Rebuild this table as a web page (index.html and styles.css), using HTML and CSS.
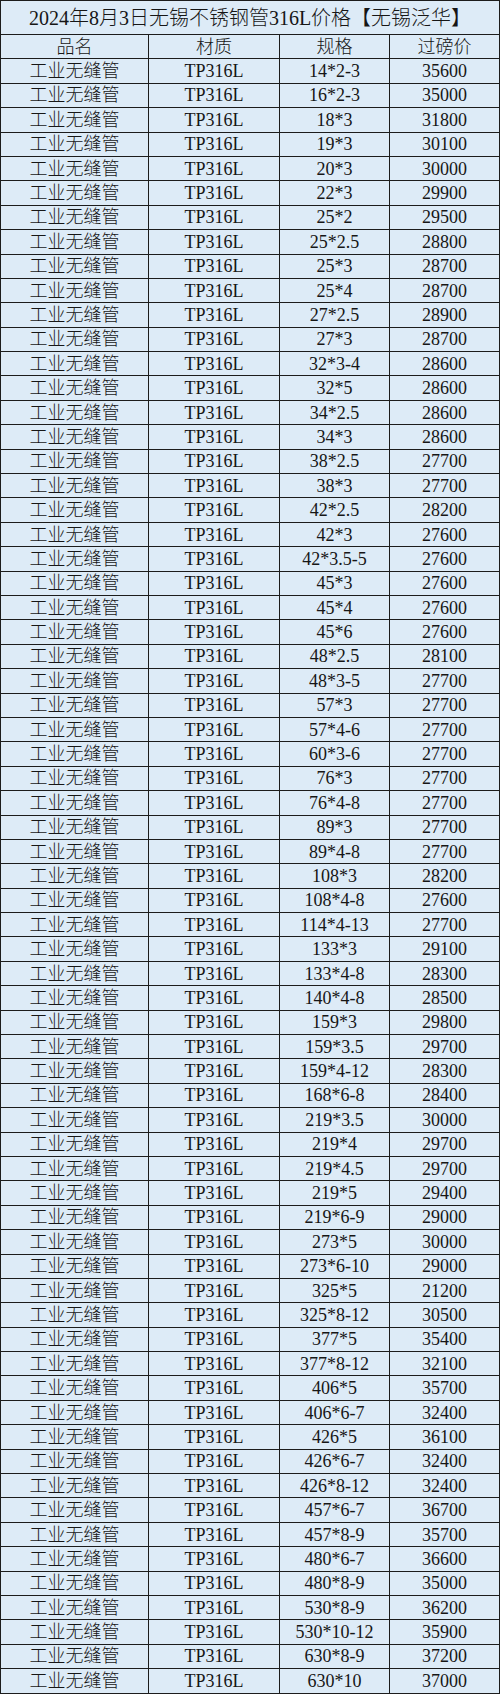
FILE: index.html
```html
<!DOCTYPE html>
<html lang="zh-CN">
<head>
<meta charset="utf-8">
<title>2024年8月3日无锡不锈钢管316L价格</title>
<link rel="stylesheet" href="styles.css">
</head>
<body>
<div class="sheet">
<div class="title">2024年8月3日无锡不锈钢管316L价格【无锡泛华】</div>
<div class="row head"><div class="cell">品名</div><div class="cell">材质</div><div class="cell">规格</div><div class="cell">过磅价</div></div>
<div class="row"><div class="cell">工业无缝管</div><div class="cell">TP316L</div><div class="cell">14*2-3</div><div class="cell">35600</div></div>
<div class="row"><div class="cell">工业无缝管</div><div class="cell">TP316L</div><div class="cell">16*2-3</div><div class="cell">35000</div></div>
<div class="row"><div class="cell">工业无缝管</div><div class="cell">TP316L</div><div class="cell">18*3</div><div class="cell">31800</div></div>
<div class="row"><div class="cell">工业无缝管</div><div class="cell">TP316L</div><div class="cell">19*3</div><div class="cell">30100</div></div>
<div class="row"><div class="cell">工业无缝管</div><div class="cell">TP316L</div><div class="cell">20*3</div><div class="cell">30000</div></div>
<div class="row"><div class="cell">工业无缝管</div><div class="cell">TP316L</div><div class="cell">22*3</div><div class="cell">29900</div></div>
<div class="row"><div class="cell">工业无缝管</div><div class="cell">TP316L</div><div class="cell">25*2</div><div class="cell">29500</div></div>
<div class="row"><div class="cell">工业无缝管</div><div class="cell">TP316L</div><div class="cell">25*2.5</div><div class="cell">28800</div></div>
<div class="row"><div class="cell">工业无缝管</div><div class="cell">TP316L</div><div class="cell">25*3</div><div class="cell">28700</div></div>
<div class="row"><div class="cell">工业无缝管</div><div class="cell">TP316L</div><div class="cell">25*4</div><div class="cell">28700</div></div>
<div class="row"><div class="cell">工业无缝管</div><div class="cell">TP316L</div><div class="cell">27*2.5</div><div class="cell">28900</div></div>
<div class="row"><div class="cell">工业无缝管</div><div class="cell">TP316L</div><div class="cell">27*3</div><div class="cell">28700</div></div>
<div class="row"><div class="cell">工业无缝管</div><div class="cell">TP316L</div><div class="cell">32*3-4</div><div class="cell">28600</div></div>
<div class="row"><div class="cell">工业无缝管</div><div class="cell">TP316L</div><div class="cell">32*5</div><div class="cell">28600</div></div>
<div class="row"><div class="cell">工业无缝管</div><div class="cell">TP316L</div><div class="cell">34*2.5</div><div class="cell">28600</div></div>
<div class="row"><div class="cell">工业无缝管</div><div class="cell">TP316L</div><div class="cell">34*3</div><div class="cell">28600</div></div>
<div class="row"><div class="cell">工业无缝管</div><div class="cell">TP316L</div><div class="cell">38*2.5</div><div class="cell">27700</div></div>
<div class="row"><div class="cell">工业无缝管</div><div class="cell">TP316L</div><div class="cell">38*3</div><div class="cell">27700</div></div>
<div class="row"><div class="cell">工业无缝管</div><div class="cell">TP316L</div><div class="cell">42*2.5</div><div class="cell">28200</div></div>
<div class="row"><div class="cell">工业无缝管</div><div class="cell">TP316L</div><div class="cell">42*3</div><div class="cell">27600</div></div>
<div class="row"><div class="cell">工业无缝管</div><div class="cell">TP316L</div><div class="cell">42*3.5-5</div><div class="cell">27600</div></div>
<div class="row"><div class="cell">工业无缝管</div><div class="cell">TP316L</div><div class="cell">45*3</div><div class="cell">27600</div></div>
<div class="row"><div class="cell">工业无缝管</div><div class="cell">TP316L</div><div class="cell">45*4</div><div class="cell">27600</div></div>
<div class="row"><div class="cell">工业无缝管</div><div class="cell">TP316L</div><div class="cell">45*6</div><div class="cell">27600</div></div>
<div class="row"><div class="cell">工业无缝管</div><div class="cell">TP316L</div><div class="cell">48*2.5</div><div class="cell">28100</div></div>
<div class="row"><div class="cell">工业无缝管</div><div class="cell">TP316L</div><div class="cell">48*3-5</div><div class="cell">27700</div></div>
<div class="row"><div class="cell">工业无缝管</div><div class="cell">TP316L</div><div class="cell">57*3</div><div class="cell">27700</div></div>
<div class="row"><div class="cell">工业无缝管</div><div class="cell">TP316L</div><div class="cell">57*4-6</div><div class="cell">27700</div></div>
<div class="row"><div class="cell">工业无缝管</div><div class="cell">TP316L</div><div class="cell">60*3-6</div><div class="cell">27700</div></div>
<div class="row"><div class="cell">工业无缝管</div><div class="cell">TP316L</div><div class="cell">76*3</div><div class="cell">27700</div></div>
<div class="row"><div class="cell">工业无缝管</div><div class="cell">TP316L</div><div class="cell">76*4-8</div><div class="cell">27700</div></div>
<div class="row"><div class="cell">工业无缝管</div><div class="cell">TP316L</div><div class="cell">89*3</div><div class="cell">27700</div></div>
<div class="row"><div class="cell">工业无缝管</div><div class="cell">TP316L</div><div class="cell">89*4-8</div><div class="cell">27700</div></div>
<div class="row"><div class="cell">工业无缝管</div><div class="cell">TP316L</div><div class="cell">108*3</div><div class="cell">28200</div></div>
<div class="row"><div class="cell">工业无缝管</div><div class="cell">TP316L</div><div class="cell">108*4-8</div><div class="cell">27600</div></div>
<div class="row"><div class="cell">工业无缝管</div><div class="cell">TP316L</div><div class="cell">114*4-13</div><div class="cell">27700</div></div>
<div class="row"><div class="cell">工业无缝管</div><div class="cell">TP316L</div><div class="cell">133*3</div><div class="cell">29100</div></div>
<div class="row"><div class="cell">工业无缝管</div><div class="cell">TP316L</div><div class="cell">133*4-8</div><div class="cell">28300</div></div>
<div class="row"><div class="cell">工业无缝管</div><div class="cell">TP316L</div><div class="cell">140*4-8</div><div class="cell">28500</div></div>
<div class="row"><div class="cell">工业无缝管</div><div class="cell">TP316L</div><div class="cell">159*3</div><div class="cell">29800</div></div>
<div class="row"><div class="cell">工业无缝管</div><div class="cell">TP316L</div><div class="cell">159*3.5</div><div class="cell">29700</div></div>
<div class="row"><div class="cell">工业无缝管</div><div class="cell">TP316L</div><div class="cell">159*4-12</div><div class="cell">28300</div></div>
<div class="row"><div class="cell">工业无缝管</div><div class="cell">TP316L</div><div class="cell">168*6-8</div><div class="cell">28400</div></div>
<div class="row"><div class="cell">工业无缝管</div><div class="cell">TP316L</div><div class="cell">219*3.5</div><div class="cell">30000</div></div>
<div class="row"><div class="cell">工业无缝管</div><div class="cell">TP316L</div><div class="cell">219*4</div><div class="cell">29700</div></div>
<div class="row"><div class="cell">工业无缝管</div><div class="cell">TP316L</div><div class="cell">219*4.5</div><div class="cell">29700</div></div>
<div class="row"><div class="cell">工业无缝管</div><div class="cell">TP316L</div><div class="cell">219*5</div><div class="cell">29400</div></div>
<div class="row"><div class="cell">工业无缝管</div><div class="cell">TP316L</div><div class="cell">219*6-9</div><div class="cell">29000</div></div>
<div class="row"><div class="cell">工业无缝管</div><div class="cell">TP316L</div><div class="cell">273*5</div><div class="cell">30000</div></div>
<div class="row"><div class="cell">工业无缝管</div><div class="cell">TP316L</div><div class="cell">273*6-10</div><div class="cell">29000</div></div>
<div class="row"><div class="cell">工业无缝管</div><div class="cell">TP316L</div><div class="cell">325*5</div><div class="cell">21200</div></div>
<div class="row"><div class="cell">工业无缝管</div><div class="cell">TP316L</div><div class="cell">325*8-12</div><div class="cell">30500</div></div>
<div class="row"><div class="cell">工业无缝管</div><div class="cell">TP316L</div><div class="cell">377*5</div><div class="cell">35400</div></div>
<div class="row"><div class="cell">工业无缝管</div><div class="cell">TP316L</div><div class="cell">377*8-12</div><div class="cell">32100</div></div>
<div class="row"><div class="cell">工业无缝管</div><div class="cell">TP316L</div><div class="cell">406*5</div><div class="cell">35700</div></div>
<div class="row"><div class="cell">工业无缝管</div><div class="cell">TP316L</div><div class="cell">406*6-7</div><div class="cell">32400</div></div>
<div class="row"><div class="cell">工业无缝管</div><div class="cell">TP316L</div><div class="cell">426*5</div><div class="cell">36100</div></div>
<div class="row"><div class="cell">工业无缝管</div><div class="cell">TP316L</div><div class="cell">426*6-7</div><div class="cell">32400</div></div>
<div class="row"><div class="cell">工业无缝管</div><div class="cell">TP316L</div><div class="cell">426*8-12</div><div class="cell">32400</div></div>
<div class="row"><div class="cell">工业无缝管</div><div class="cell">TP316L</div><div class="cell">457*6-7</div><div class="cell">36700</div></div>
<div class="row"><div class="cell">工业无缝管</div><div class="cell">TP316L</div><div class="cell">457*8-9</div><div class="cell">35700</div></div>
<div class="row"><div class="cell">工业无缝管</div><div class="cell">TP316L</div><div class="cell">480*6-7</div><div class="cell">36600</div></div>
<div class="row"><div class="cell">工业无缝管</div><div class="cell">TP316L</div><div class="cell">480*8-9</div><div class="cell">35000</div></div>
<div class="row"><div class="cell">工业无缝管</div><div class="cell">TP316L</div><div class="cell">530*8-9</div><div class="cell">36200</div></div>
<div class="row"><div class="cell">工业无缝管</div><div class="cell">TP316L</div><div class="cell">530*10-12</div><div class="cell">35900</div></div>
<div class="row"><div class="cell">工业无缝管</div><div class="cell">TP316L</div><div class="cell">630*8-9</div><div class="cell">37200</div></div>
<div class="row"><div class="cell">工业无缝管</div><div class="cell">TP316L</div><div class="cell">630*10</div><div class="cell">37000</div></div>
</div>
</body>
</html>
```

FILE: styles.css
```css
html, body {
  margin: 0;
  padding: 0;
  background: #ddebf7;
}
.sheet {
  width: 500px;
  box-sizing: border-box;
  height: 1694px;
  border: 1px solid #1c1c1c;
  background: #1c1c1c;
  display: flex;
  flex-direction: column;
  gap: 1px;
  font-family: "Liberation Serif", "Noto Sans CJK SC", serif;
  font-weight: 300;
  color: #161616;
}
.title {
  height: 33px;
  flex: none;
  background: #ddebf7;
  display: flex;
  align-items: center;
  justify-content: center;
  font-size: 20px;
  line-height: 1;
}
.row {
  flex: 1 1 0;
  min-height: 0;
  display: grid;
  grid-template-columns: 147px 130px 109px 1fr;
  gap: 1px;
}
.cell {
  background: #ddebf7;
  display: flex;
  align-items: center;
  justify-content: center;
  font-size: 18px;
  line-height: 1;
  white-space: nowrap;
}
```
